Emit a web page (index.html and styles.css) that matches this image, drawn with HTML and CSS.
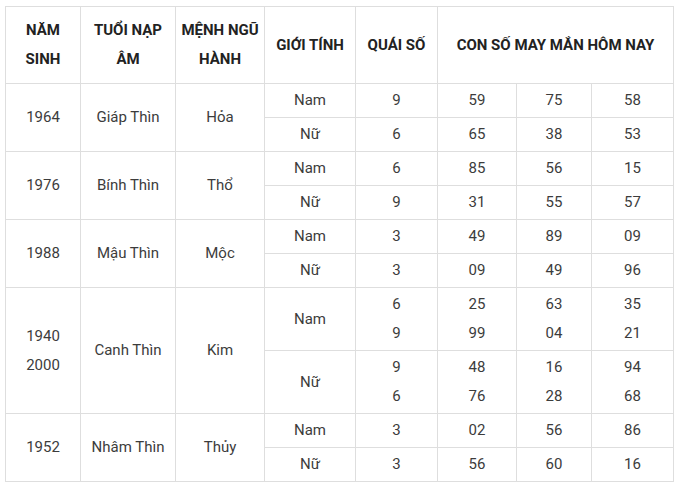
FILE: index.html
```html
<!DOCTYPE html>
<html lang="vi">
<head>
<meta charset="utf-8">
<link rel="stylesheet" href="styles.css">
</head>
<body>
<table class="tbl">
  <colgroup>
    <col class="c1"><col class="c2"><col class="c3"><col class="c4"><col class="c5"><col class="c6"><col class="c7"><col class="c8">
  </colgroup>
  <thead>
    <tr>
      <th>NĂM<br>SINH</th>
      <th>TUỔI NẠP<br>ÂM</th>
      <th>MỆNH NGŨ<br>HÀNH</th>
      <th>GIỚI TÍNH</th>
      <th>QUÁI SỐ</th>
      <th colspan="3">CON SỐ MAY MẮN HÔM NAY</th>
    </tr>
  </thead>
  <tbody>
    <tr><td rowspan="2">1964</td><td rowspan="2">Giáp Thìn</td><td rowspan="2">Hỏa</td><td>Nam</td><td>9</td><td>59</td><td>75</td><td>58</td></tr>
    <tr><td>Nữ</td><td>6</td><td>65</td><td>38</td><td>53</td></tr>
    <tr><td rowspan="2">1976</td><td rowspan="2">Bính Thìn</td><td rowspan="2">Thổ</td><td>Nam</td><td>6</td><td>85</td><td>56</td><td>15</td></tr>
    <tr><td>Nữ</td><td>9</td><td>31</td><td>55</td><td>57</td></tr>
    <tr><td rowspan="2">1988</td><td rowspan="2">Mậu Thìn</td><td rowspan="2">Mộc</td><td>Nam</td><td>3</td><td>49</td><td>89</td><td>09</td></tr>
    <tr><td>Nữ</td><td>3</td><td>09</td><td>49</td><td>96</td></tr>
    <tr><td rowspan="2">1940<br>2000</td><td rowspan="2">Canh Thìn</td><td rowspan="2">Kim</td><td>Nam</td><td>6<br>9</td><td>25<br>99</td><td>63<br>04</td><td>35<br>21</td></tr>
    <tr><td>Nữ</td><td>9<br>6</td><td>48<br>76</td><td>16<br>28</td><td>94<br>68</td></tr>
    <tr><td rowspan="2">1952</td><td rowspan="2">Nhâm Thìn</td><td rowspan="2">Thủy</td><td>Nam</td><td>3</td><td>02</td><td>56</td><td>86</td></tr>
    <tr><td>Nữ</td><td>3</td><td>56</td><td>60</td><td>16</td></tr>
  </tbody>
</table>
</body>
</html>
```
FILE: styles.css
```css
html, body {
  margin: 0;
  background: #ffffff;
}
body {
  padding: 6px 0 0 5px;
  font-family: Roboto, "Liberation Sans", Arial, sans-serif;
  font-size: 15px;
  color: #3c3c3c;
}
.tbl {
  border-collapse: collapse;
  table-layout: fixed;
  width: 668px;
}
.c1 { width: 75px; }
.c2 { width: 95px; }
.c3 { width: 89px; }
.c4 { width: 91px; }
.c5 { width: 82px; }
.c6 { width: 79px; }
.c7 { width: 75px; }
.c8 { width: 82px; }
.tbl th, .tbl td {
  border: 1px solid #dedede;
  text-align: center;
  vertical-align: middle;
  line-height: 29px;
  padding: 2px 0;
}
.tbl th {
  font-weight: 700;
  color: #222222;
  padding: 9px 0;
}
```
